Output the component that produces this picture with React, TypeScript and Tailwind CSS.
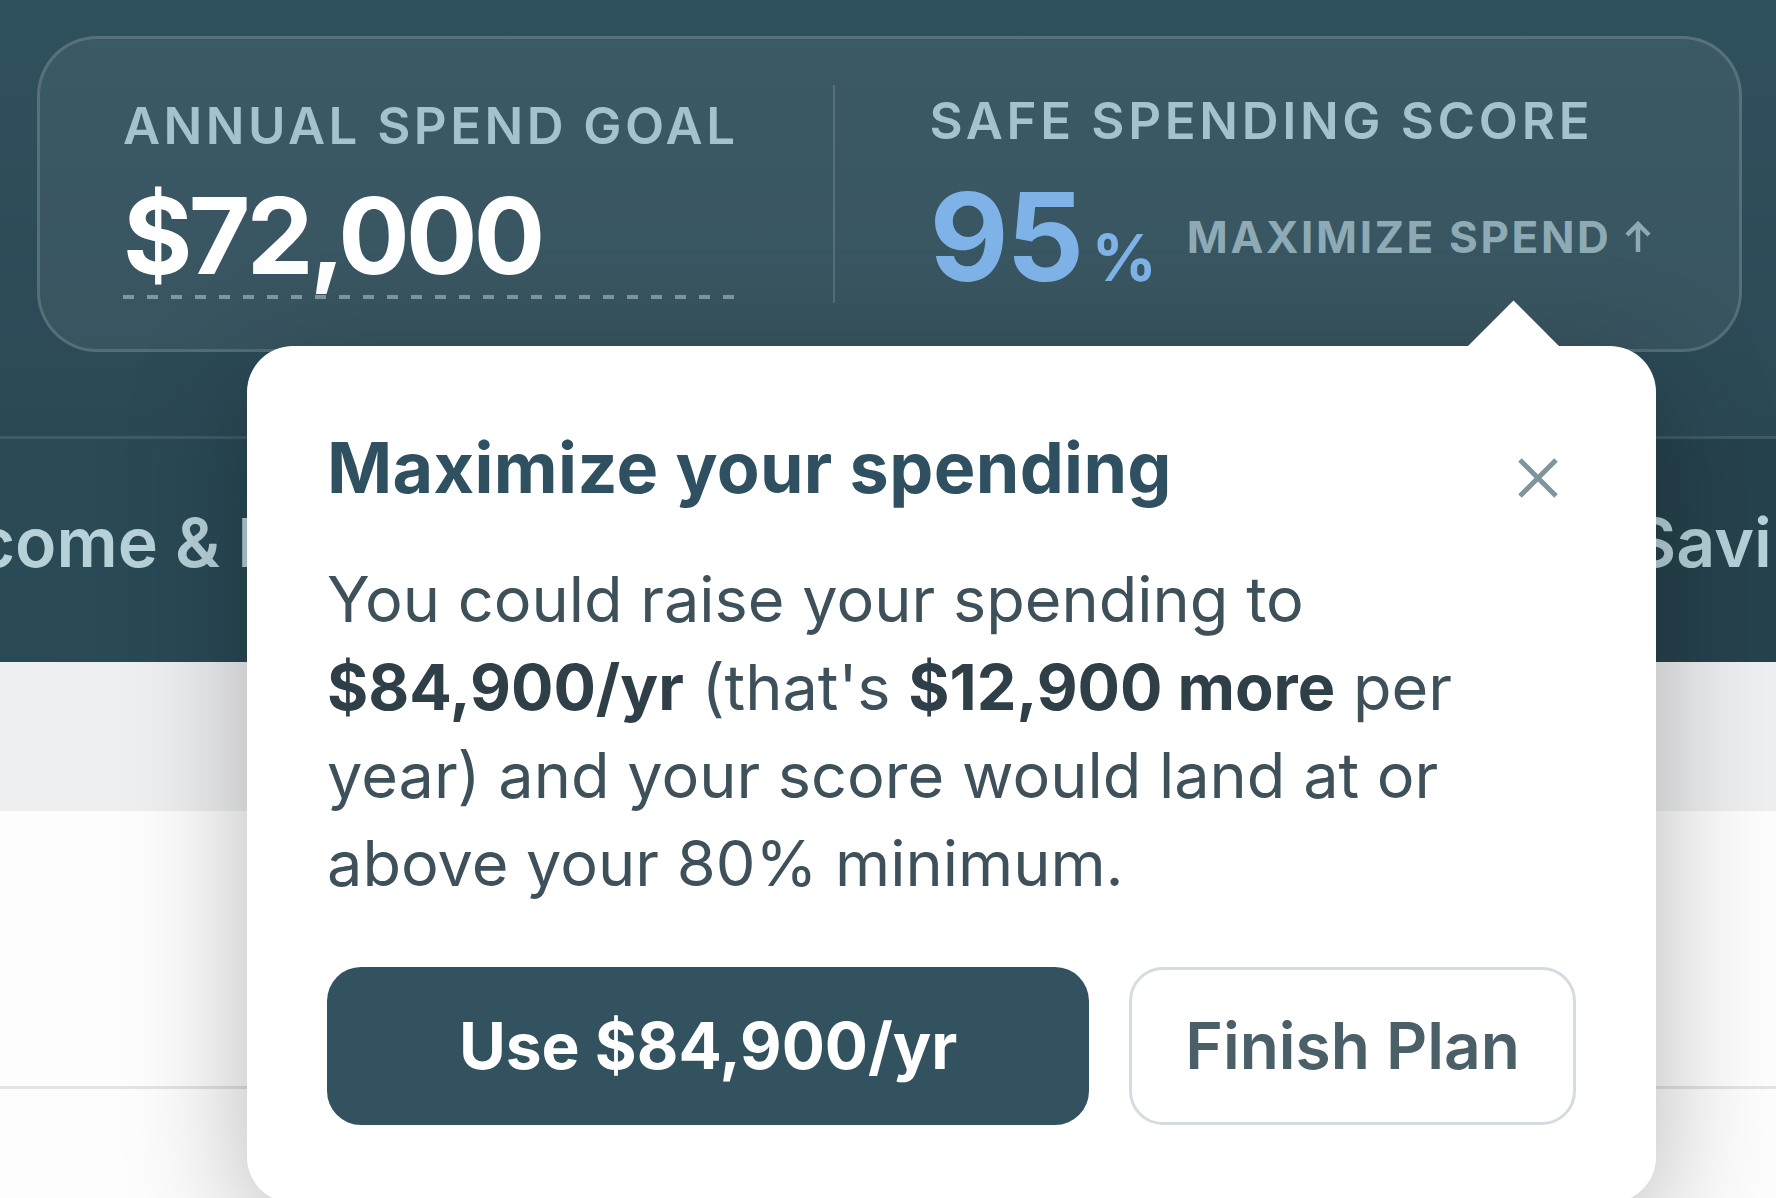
import { useState } from "react";

const font = { fontFamily: "Inter, 'Noto Sans', sans-serif" };

function CloseIcon() {
  return (
    <svg width="40" height="40" viewBox="0 0 40 40" fill="none">
      <path d="M2 2 L38 38 M38 2 L2 38" stroke="#7f949b" strokeWidth="5" />
    </svg>
  );
}

function ArrowUpIcon() {
  return (
    <svg width="28" height="32" viewBox="0 0 28 32" fill="none" className="ml-[12px]">
      <path d="M14 31 V3 M3 14 L14 3 L25 14" stroke="#8eaab5" strokeWidth="4.5" strokeLinejoin="miter" />
    </svg>
  );
}

export default function App() {
  const [open, setOpen] = useState(true);

  return (
    <div className="relative h-[1198px] w-[1776px] overflow-hidden bg-[#fdfdfd]" style={font}>
      {/* header */}
      <div className="border-b-[3px] border-[#3e5b66] bg-gradient-to-b from-[#2f505d] to-[#2b4955] pt-[36px] pb-[84px]">
        <div className="ml-[37px] mr-[34px] flex h-[316px] items-start rounded-[60px] border-[3px] border-white/15 bg-white/[0.06] pl-[83px]">
          <div className="mt-[56px] flex flex-col">
            <div className="text-[51px] font-semibold leading-[61px] tracking-[0.068em] text-[#a4c2cd]">ANNUAL SPEND GOAL</div>
            <div className="mt-[27px] text-[106px] font-bold leading-none tracking-[-0.035em] text-white">$72,000</div>
            <div className="mt-[6px] h-[4px] w-full bg-[repeating-linear-gradient(90deg,#7f97a0_0px,#7f97a0_11px,transparent_11px,transparent_24px)]" />
          </div>
          <div className="ml-[94px] mt-[46px] h-[218px] w-[2px] bg-white/15" />
          <div className="ml-[95px] mt-[51px] flex flex-col">
            <div className="text-[51px] font-semibold leading-[61px] tracking-[0.072em] text-[#a4c2cd]">SAFE SPENDING SCORE</div>
            <div className="mt-[25px] flex items-center">
              <div className="flex items-baseline text-[#7fb3e8]">
                <span className="text-[122px] font-bold leading-none tracking-[-0.02em]">95</span>
                <span className="ml-[10px] text-[64px] font-bold leading-none">%</span>
              </div>
              <button onClick={() => setOpen(true)} className="ml-[30px] flex items-center text-[44px] font-bold leading-none tracking-[0.06em] text-[#8eaab5]">
                MAXIMIZE SPEND
                <ArrowUpIcon />
              </button>
            </div>
          </div>
        </div>
      </div>

      {/* tabs */}
      <div className="flex h-[223px] overflow-hidden bg-gradient-to-r from-[#2a4a56] to-[#26424d] pt-[69px]">
        <div className="-ml-[85px] w-[1717px] shrink-0 text-[68px] font-semibold leading-none text-[#b7d1d8]">Income &amp; Expenses</div>
        <div className="shrink-0 text-[68px] font-semibold leading-none text-[#b7d1d8]">Savings</div>
      </div>

      {/* sub band */}
      <div className="h-[149px] bg-[#eeeff1]" />
      <div className="h-[275px]" />
      <div className="h-[3px] bg-[#dfe4e8]" />

      {/* popover */}
      {open && (
        <div className="absolute left-[247px] top-[346px] w-[1409px] rounded-[46px] bg-white px-[80px] pt-[80px] pb-[78px] shadow-[0_30px_120px_rgba(0,0,0,0.28)]">
          <div className="absolute -top-[32px] left-[1234px] h-[65px] w-[65px] rotate-45 bg-white" />
          <div className="relative flex items-start justify-between">
            <h2 className="text-[70px] font-bold leading-[84px] tracking-[0.005em] text-[#2f5060]">Maximize your spending</h2>
            <button onClick={() => setOpen(false)} className="mr-[18px] mt-[32px]">
              <CloseIcon />
            </button>
          </div>
          <p className="relative mt-[45px] text-[63px] leading-[88px] text-[#3e515b]">
            You could raise your spending to <b className="font-bold text-[#2f3f48]">$84,900/yr</b> (that's{" "}
            <b className="font-bold text-[#2f3f48]">$12,900 more</b> per year) and your score would land at or above your 80% minimum.
          </p>
          <div className="relative mt-[60px] flex gap-[40px]">
            <button className="h-[158px] flex-1 rounded-[34px] bg-[#33525f] text-[64px] font-bold text-white">Use $84,900/yr</button>
            <button className="h-[158px] rounded-[34px] border-[3px] border-[#d3dde1] px-[53px] text-[64px] font-semibold text-[#4b5f68]">Finish Plan</button>
          </div>
        </div>
      )}
    </div>
  );
}
